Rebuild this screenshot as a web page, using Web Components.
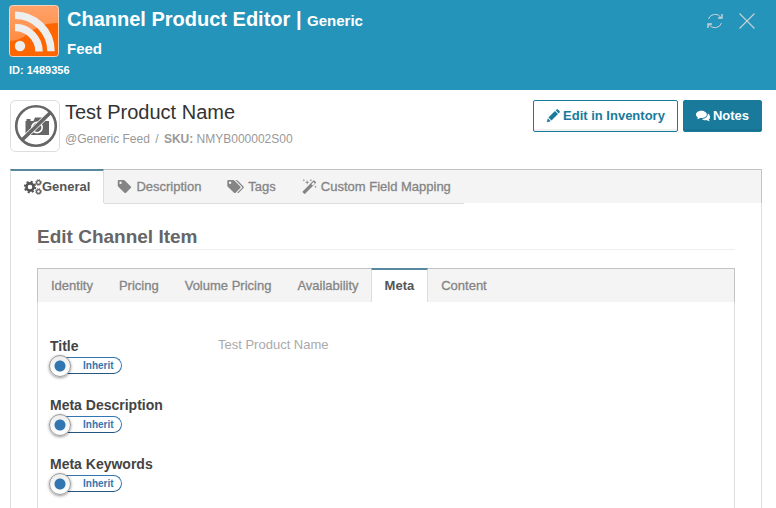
<!DOCTYPE html>
<html lang="en">
<head>
<meta charset="utf-8">
<title>Channel Product Editor</title>
<style>
  html, body { height: 100%; }
  body {
    margin: 0;
    overflow: hidden;
    background: #fff;
    color: #333;
    font: 13px/18px "Liberation Sans", Arial, sans-serif;
  }
</style>
</head>
<body>
<channel-editor></channel-editor>

<script>
const ICONS = {
  refresh: `<g fill="none" stroke="currentColor"><path d="M1.500 6A7 7 0 0 1 14 4.500M14.500 10A7 7 0 0 1 2 11.500"/><path d="M15 1v4h-4M1 15v-4h4" stroke-width="1.400"/></g>`,
  close: `<path d="M0.500 0.500l15 15M15.500 0.500l-15 15" fill="none" stroke="currentColor" stroke-width="1.100"/>`,
  pencil: `<path d="M1 15l1-4.500 3.500 3.500zM2.800 9.700l7.400-7.400 3.500 3.500-7.400 7.400zM11 1.500l1-1q.8-.6 1.600 0l1.900 1.900q.7.800 0 1.600l-1 1z"/>`,
  comments: `<path d="M6.200 2C2.800 2 0 3.900 0 6.300c0 1.400.9 2.600 2.300 3.400-.2.700-.6 1.300-1.200 1.900 1.500-.1 2.800-.6 3.700-1.300.5.100.9.100 1.400.1 3.400 0 6.200-1.800 6.200-4.100S9.600 2 6.200 2z"/><path d="M13.500 5.200c.5 3.500-3 6-6.800 6.200 1 .9 2.600 1.400 4.300 1.400l1-.1c1 .800 2.200 1.200 3.700 1.300-.6-.6-.9-1.200-1.100-1.900C17 10.600 16.400 6.800 13.500 5.200z"/>`,
  cogs: `<g fill="none" stroke="currentColor"><circle cx="6" cy="8" r="3.600" stroke-width="2.600"/><circle cx="6" cy="8" r="5.300" stroke-width="1.800" stroke-dasharray="2.080 2.080"/><circle cx="14.500" cy="3.500" r="1.900" stroke-width="1.200"/><circle cx="14.500" cy="3.500" r="2.900" stroke-width="1" stroke-dasharray="1.140 1.140"/><circle cx="14.500" cy="12.500" r="1.900" stroke-width="1.200"/><circle cx="14.500" cy="12.500" r="2.900" stroke-width="1" stroke-dasharray="1.140 1.140"/></g>`,
  tag: `<path fill-rule="evenodd" d="M.8 2.200Q.8 1 2 1h5q.8 0 1.600.8l6.100 6.100q.8.900 0 1.700l-5 5q-.9.800-1.700 0L1.600 8.400Q.8 7.600.8 6.800zM3.800 2.700a1.300 1.300 0 1 0 0 2.600 1.300 1.300 0 0 0 0-2.600z"/>`,
  tags: `<path fill-rule="evenodd" d="M.3 2.200Q.3 1 1.500 1h5q.8 0 1.600.8l6.100 6.100q.8.900 0 1.700l-5 5q-.9.800-1.700 0L1.100 8.400Q.3 7.600.3 6.800zM3.300 2.700a1.300 1.300 0 1 0 0 2.600 1.300 1.300 0 0 0 0-2.600z"/><path d="M9 1h1q.8 0 1.600.8l6 6.100q.8.900 0 1.700l-5 5q-.9.800-1.700 0l5.100-5.100q.6-.7 0-1.300z"/>`,
  magic: `<path fill-rule="evenodd" d="M.7 13.200L12.200 1.700q.5-.4 1 0l1.600 1.600q.4.500 0 1L3.300 15.800q-.5.300-1 0L.7 14.200q-.4-.5 0-1zM10 5.500l1.500 1.500 2.200-2.200-1.500-1.500z"/><path d="M5.500 1l.6 1.900L8 3.500l-1.900.6L5.500 6l-.6-1.900L3 3.500l1.900-.6zM2 0l.4.9.9.4-.9.4L2 2.600l-.4-.9-.9-.4.900-.4zM9.500 0l.4.900.9.4-.9.400-.4.900-.4-.9-.9-.4.900-.4zM14.500 7l.4.9.9.4-.9.400-.4.900-.4-.9-.9-.4.900-.4z"/>`,
};

const WIDE = { cogs: 18, tags: 18 };

class UiIcon extends HTMLElement {
  constructor() {
    super();
    this.attachShadow({ mode: "open" });
  }

  connectedCallback() {
    const name = this.getAttribute("name");
    const width = WIDE[name] ?? 16;
    this.shadowRoot.innerHTML = /* html */`
      <style>
        :host { display: inline-flex; flex: none; }
        svg { height: var(--icon-size, 16px); fill: currentColor; overflow: visible; }
      </style>
      <svg viewBox="0 0 ${width} 16" aria-hidden="true">${ICONS[name]}</svg>
    `;
  }
}

class EditorHeader extends HTMLElement {
  constructor() {
    super();
    this.attachShadow({ mode: "open" });
  }

  connectedCallback() {
    this.shadowRoot.innerHTML = /* html */`
      <style>
        :host {
          display: block;
          box-sizing: border-box;
          padding: 5px 21px 11px 9px;
          background: #2494ba;
          color: #fff;
          font-weight: bold;
        }
        .row { display: flex; align-items: flex-start; }
        .logo { flex: none; width: 50px; height: 52px; margin-right: 8px; }
        h1 { margin: 0; width: 42%; font-size: 20px; line-height: 28px; }
        small { font-size: 15px; line-height: 1; }
        .tools { display: flex; gap: 16px; margin: 8px 0 0 auto; }
        button {
          display: flex;
          padding: 0;
          border: 0;
          background: none;
          color: #c9d2d6;
          cursor: pointer;
        }
        .id { font-size: 11px; line-height: 18px; }
      </style>
      <div class="row">
        <svg class="logo" viewBox="0 0 50 52" aria-hidden="true">
          <defs>
            <linearGradient id="g" x1="0" y1="0" x2="0" y2="1">
              <stop offset="0" stop-color="#ffa26a"/><stop offset="1" stop-color="#ff8330"/>
            </linearGradient>
          </defs>
          <rect x=".5" y=".5" width="49" height="51" rx="3" fill="url(#g)" stroke="#f3d3bd"/>
          <path d="M1 36C20 35 22 18 49 18V48a3 3 0 0 1-3 3H4a3 3 0 0 1-3-3z" fill="#ff6600"/>
          <g fill="none" stroke="#eee" stroke-width="7.500">
            <path d="M6 10.200A36 36 0 0 1 42 46.200"/>
            <path d="M6 22.500A24 24 0 0 1 30 46.500"/>
          </g>
          <circle cx="11" cy="41" r="5.200" fill="#eee"/>
        </svg>
        <h1><slot></slot> | <small><slot name="channel"></slot></small></h1>
        <div class="tools">
          <button type="button" aria-label="Refresh"><ui-icon name="refresh"></ui-icon></button>
          <button type="button" aria-label="Close"><ui-icon name="close"></ui-icon></button>
        </div>
      </div>
      <div class="id">ID: ${this.getAttribute("item-id")}</div>
    `;
  }
}

class ActionButton extends HTMLElement {
  constructor() {
    super();
    this.attachShadow({ mode: "open" });
  }

  connectedCallback() {
    this.shadowRoot.innerHTML = /* html */`
      <style>
        :host { display: block; }
        button {
          display: flex;
          align-items: center;
          gap: 3px;
          height: 32px;
          padding: 0 12px;
          border: 1px solid #1a7a9b;
          border-radius: 2px;
          background: #fff;
          box-shadow: inset 0 -2px 0 rgba(0, 0, 0, .06);
          color: #1a7a9b;
          font: bold 13px/18px "Liberation Sans", Arial, sans-serif;
          white-space: nowrap;
          cursor: pointer;
        }
        :host([primary]) button { background: #1a7a9b; color: #fff; }
        ui-icon { --icon-size: 14px; }
      </style>
      <button type="button"><ui-icon name="${this.getAttribute("icon")}"></ui-icon><slot></slot></button>
    `;
  }
}

class ProductSummary extends HTMLElement {
  constructor() {
    super();
    this.attachShadow({ mode: "open" });
  }

  connectedCallback() {
    this.shadowRoot.innerHTML = /* html */`
      <style>
        :host { display: flex; align-items: flex-start; padding: 10px 14px 17px 10px; }
        .thumb { flex: none; width: 50px; height: 52px; margin-right: 5px; }
        h2 { margin: 0; color: #333; font-size: 20px; font-weight: normal; line-height: 24px; }
        p { margin: 6px 0 0; color: #999; font-size: 12px; line-height: 18px; }
        .sep { margin: 0 2px; }
        .actions { display: flex; gap: 5px; margin-left: auto; }
      </style>
      <svg class="thumb" viewBox="0 0 50 52" aria-hidden="true">
        <rect x=".5" y=".5" width="49" height="51" rx="5" fill="#fff" stroke="#ddd"/>
        <path fill="#666" d="M15.500 21h1v-2h4v2h3l1.500-3.500h9L35.500 21H39v14H15.500z"/>
        <circle cx="27" cy="27.500" r="5.200" fill="none" stroke="#fff" stroke-width="1.600"/>
        <path d="M12 40L40 13" stroke="#fff" stroke-width="5"/>
        <path d="M12 40L40 13" stroke="#666" stroke-width="3.600"/>
        <circle cx="26" cy="26" r="19.800" fill="none" stroke="#666" stroke-width="2.600"/>
      </svg>
      <div>
        <h2>${this.getAttribute("name")}</h2>
        <p>${this.getAttribute("channel")} <span class="sep">/</span> <b>SKU:</b> ${this.getAttribute("sku")}</p>
      </div>
      <div class="actions"><slot></slot></div>
    `;
  }
}

class TabItem extends HTMLElement {
  constructor() {
    super();
    this.attachShadow({ mode: "open" });
  }

  connectedCallback() {
    const icon = this.getAttribute("icon");
    const active = this.hasAttribute("active");
    this.shadowRoot.innerHTML = /* html */`
      <style>
        :host { display: block; }
        button {
          --icon-size: 15px;
          display: flex;
          align-items: center;
          gap: 4px;
          height: 34px;
          padding: 0 13px;
          border: 0;
          border-bottom: 1px solid var(--tab-line, #ddd);
          background: none;
          color: #858585;
          font: 13px/18px "Liberation Sans", Arial, sans-serif;
          -webkit-text-stroke: 0.3px currentColor;
          white-space: nowrap;
          cursor: pointer;
        }
        :host([active]) button {
          --icon-size: 16px;
          gap: 0;
          border: solid #ddd;
          border-width: 2px 1px 0;
          border-top-color: #57889c;
          background: #fff;
          color: #555;
          font-weight: bold;
          -webkit-text-stroke: 0;
        }
      </style>
      <button type="button" role="tab" aria-selected="${active}">
        ${icon ? `<ui-icon name="${icon}"></ui-icon>` : ""}<slot></slot>
      </button>
    `;
  }
}

class TabPanel extends HTMLElement {
  constructor() {
    super();
    this.attachShadow({ mode: "open" });
  }

  connectedCallback() {
    this.shadowRoot.innerHTML = /* html */`
      <style>
        :host { display: flex; flex-direction: column; flex: 1; }
        .strip {
          display: flex;
          height: 33px;
          border: 1px solid #c3c3c3;
          border-bottom: 0;
          background: #f4f4f4;
        }
        ::slotted(tab-item[active]) { margin: -1px 0 0 -1px; }
        .body {
          display: flex;
          flex-direction: column;
          flex: 1;
          border: solid #ddd;
          border-width: 0 1px;
        }
      </style>
      <div class="strip" role="tablist"><slot name="tab"></slot></div>
      <div class="body"><slot></slot></div>
    `;
  }
}

class InheritField extends HTMLElement {
  constructor() {
    super();
    this.attachShadow({ mode: "open" });
  }

  connectedCallback() {
    const value = this.getAttribute("value");
    this.shadowRoot.innerHTML = /* html */`
      <style>
        :host { display: flex; align-items: flex-start; height: 59px; }
        .name { width: 168px; }
        .title { display: block; color: #444; font-size: 14px; font-weight: bold; line-height: 20px; }
        .switch {
          display: flex;
          align-items: center;
          box-sizing: border-box;
          width: 72px;
          height: 17px;
          margin-top: 1px;
          border: 1px solid #3276b1;
          border-bottom-color: #245682;
          border-radius: 9px;
          color: #3276b1;
          font-size: 10px;
          font-weight: bold;
          cursor: pointer;
        }
        .switch input {
          flex: none;
          appearance: none;
          box-sizing: border-box;
          width: 22px;
          height: 22px;
          margin: 0 12px 0 -2px;
          border: 1px solid #999;
          border-radius: 50%;
          background: radial-gradient(circle, #3276b1 5px, transparent 6px), linear-gradient(#eee, #fff);
          box-shadow: 0 1px 3px rgba(0, 0, 0, .4);
        }
        .value {
          flex: 1;
          min-width: 0;
          padding: 0;
          border: 0;
          background: none;
          color: #aaa;
          font: 13px/18px "Liberation Sans", Arial, sans-serif;
        }
      </style>
      <div class="name">
        <label class="title" for="value"><slot></slot></label>
        <label class="switch"><input type="checkbox" checked>Inherit</label>
      </div>
      <input class="value" id="value" type="text" value="${value ?? ""}" readonly>
    `;
  }
}

class ChannelEditor extends HTMLElement {
  constructor() {
    super();
    this.attachShadow({ mode: "open" });
  }

  connectedCallback() {
    this.shadowRoot.innerHTML = /* html */`
      <style>
        :host { display: flex; flex-direction: column; min-height: 100%; }
        .outer { margin: 0 14px 0 10px; }
        .section { display: flex; flex-direction: column; flex: 1; padding: 22px 26px 0; }
        h3 {
          margin: 0 0 18px;
          border-bottom: 1px solid #eee;
          color: #666;
          font-size: 19px;
          line-height: 24px;
        }
        .inner { --tab-line: transparent; }
        .fields { padding: 34px 12px 0; }
      </style>
      <editor-header item-id="1489356">Channel Product Editor<span slot="channel">Generic Feed</span></editor-header>
      <product-summary name="Test Product Name" channel="@Generic Feed" sku="NMYB000002S00">
        <action-button icon="pencil">Edit in Inventory</action-button>
        <action-button icon="comments" primary>Notes</action-button>
      </product-summary>
      <tab-panel class="outer">
        <tab-item slot="tab" icon="cogs" active>General</tab-item>
        <tab-item slot="tab" icon="tag">Description</tab-item>
        <tab-item slot="tab" icon="tags">Tags</tab-item>
        <tab-item slot="tab" icon="magic">Custom Field Mapping</tab-item>
        <div class="section">
          <h3>Edit Channel Item</h3>
          <tab-panel class="inner">
            <tab-item slot="tab">Identity</tab-item>
            <tab-item slot="tab">Pricing</tab-item>
            <tab-item slot="tab">Volume Pricing</tab-item>
            <tab-item slot="tab">Availability</tab-item>
            <tab-item slot="tab" active>Meta</tab-item>
            <tab-item slot="tab">Content</tab-item>
            <div class="fields">
              <inherit-field value="Test Product Name">Title</inherit-field>
              <inherit-field>Meta Description</inherit-field>
              <inherit-field>Meta Keywords</inherit-field>
            </div>
          </tab-panel>
        </div>
      </tab-panel>
    `;
  }
}

customElements.define("ui-icon", UiIcon);
customElements.define("editor-header", EditorHeader);
customElements.define("action-button", ActionButton);
customElements.define("product-summary", ProductSummary);
customElements.define("tab-item", TabItem);
customElements.define("tab-panel", TabPanel);
customElements.define("inherit-field", InheritField);
customElements.define("channel-editor", ChannelEditor);
</script>
</body>
</html>
